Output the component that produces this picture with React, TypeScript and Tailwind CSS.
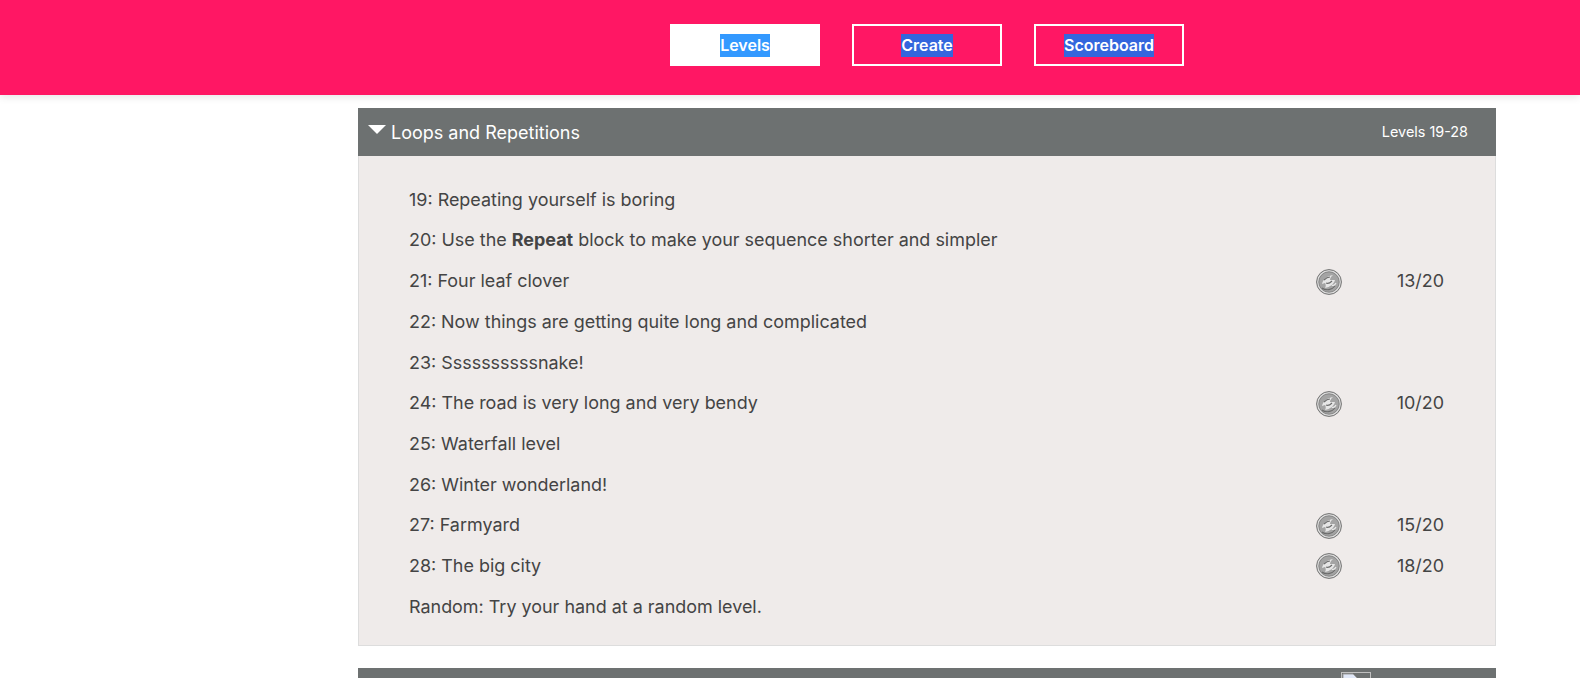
const levels = [
  { label: "19: Repeating yourself is boring" },
  { label: <>20: Use the <b className="font-bold">Repeat</b> block to make your sequence shorter and simpler</> },
  { label: "21: Four leaf clover", score: "13/20" },
  { label: "22: Now things are getting quite long and complicated" },
  { label: "23: Ssssssssssnake!" },
  { label: "24: The road is very long and very bendy", score: "10/20" },
  { label: "25: Waterfall level" },
  { label: "26: Winter wonderland!" },
  { label: "27: Farmyard", score: "15/20" },
  { label: "28: The big city", score: "18/20" },
  { label: "Random: Try your hand at a random level." },
];

function Coin() {
  return (
    <svg width="26" height="26" viewBox="0 0 26 26" className="shrink-0">
      <circle cx="13" cy="13" r="12.4" fill="#dcdcdc" stroke="#6f6f6f" strokeWidth="1" />
      <circle cx="13" cy="13" r="10.2" fill="#a4a4a4" stroke="#858585" strokeWidth="1" />
      <path d="M6 15c1-5 5-8 11-9-2 2-3 3-3 5l5 0c-1 4-5 7-10 8 1-2 1-3 0-5z" fill="#e6e6e6" />
      <path d="M8 11c2-2 4-3 6-3M6 19c4 3 10 2 13-2M10 14c2 1 4 0 6-2" fill="none" stroke="#6b6b6b" strokeWidth="1.1" />
      <path d="M16 16c1 1 3 0 4-2" fill="none" stroke="#e8e8e8" strokeWidth="1.2" />
    </svg>
  );
}

function NavButton({ label, active, highlight }: { label: string; active?: boolean; highlight: string }) {
  return (
    <a className={`w-[150px] h-[42px] flex items-center justify-center border-2 border-white ${active ? "bg-white" : ""}`}>
      <span className={`text-white text-[16px] font-semibold leading-[23px] ${highlight}`}>{label}</span>
    </a>
  );
}

export default function App() {
  return (
    <div className="h-[678px] overflow-hidden bg-white font-['Inter',sans-serif] text-[#444444]">
      {/* header */}
      <header className="h-[95px] bg-[#ff1764] pl-[670px] pt-6 flex gap-8 shadow-[0_2px_8px_rgba(0,0,0,0.1)]">
        <NavButton label="Levels" active highlight="bg-[#3399ff]" />
        <NavButton label="Create" highlight="bg-[#3366dd]" />
        <NavButton label="Scoreboard" highlight="bg-[#3366dd]" />
      </header>

      <main className="pl-[358px] pr-[84px] pt-[13px]">
        <section>
          <div className="h-12 bg-[#6d7171] text-white flex items-center pl-[10px] pr-7">
            <span className="w-0 h-0 border-x-[9px] border-x-transparent border-t-[9px] border-t-white mr-[5px] -mt-1.5" />
            <h2 className="text-[18px] flex-1">Loops and Repetitions</h2>
            <span className="text-[14.4px]">Levels 19-28</span>
          </div>
          <div className="h-[490px] bg-[#efebea] border border-t-0 border-[#dddddd] px-[51px] pt-[23.9px]">
            {levels.map((level, i) => (
              <div key={i} className="h-[40.7px] flex items-center text-[17.96px]">
                <span className="flex-1 -ml-px">{level.label}</span>
                {level.score && <Coin />}
                <span className="w-[102px] text-right">{level.score}</span>
              </div>
            ))}
          </div>
        </section>

        <section className="mt-[22px]">
          <div className="h-12 bg-[#6d7171] relative">
            <span className="absolute left-[983px] top-1 w-[30px] h-10 border border-[#c0c0c0]">
              <svg width="16" height="16" viewBox="0 0 16 16">
                <path d="M1 1h10l4 4v10H1z" fill="#dfe7f7" stroke="#a0a0a0" />
              </svg>
            </span>
          </div>
        </section>
      </main>
    </div>
  );
}
